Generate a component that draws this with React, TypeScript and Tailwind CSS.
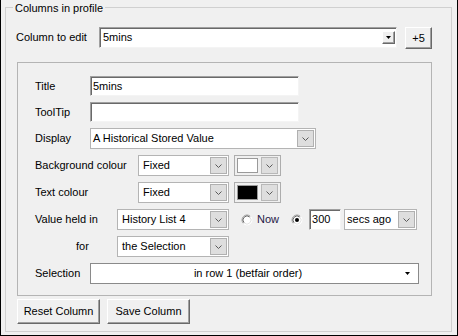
import type { JSX } from "react";

// Win10 style chevron used in the themed drop-down buttons
const Chevron = (): JSX.Element => (
    <svg width="7" height="4" viewBox="0 0 7 4">
        <path d="M0.5 0.5L3.5 3.5L6.5 0.5" fill="none" stroke="#5a5a5a" strokeWidth="1"/>
    </svg>
);

// Classic solid black drop-down triangle
const Triangle = (): JSX.Element => (
    <svg width="5" height="3" viewBox="0 0 5 3">
        <path d="M0 0H5L2.5 3Z" fill="#000"/>
    </svg>
);

const Radio = ({checked}: {checked?: boolean}): JSX.Element => (
    <svg width="12" height="12" viewBox="0 0 12 12" className="shrink-0">
        <circle cx="6" cy="6" r="5" fill="#fff"/>
        <path d="M2.46 9.54A5 5 0 0 1 9.54 2.46" fill="none" stroke="#a0a0a0"/>
        <path d="M3.17 8.83A4 4 0 0 1 8.83 3.17" fill="none" stroke="#696969"/>
        <path d="M9.54 2.46A5 5 0 0 1 2.46 9.54" fill="none" stroke="#ffffff"/>
        <path d="M8.83 3.17A4 4 0 0 1 3.17 8.83" fill="none" stroke="#e3e3e3"/>
        {checked && <circle cx="6" cy="6" r="2" fill="#000"/>}
    </svg>
);

const TextBox = ({value, className}: {value?: string; className: string}): JSX.Element => (
    <div className={`flex items-center bg-white border border-t-[#a0a0a0] border-l-[#a0a0a0] border-r-[#f4f4f4] border-b-[#f4f4f4] shadow-[inset_1px_1px_0_#696969] pl-[2px] ${className}`}>
        {value}
    </div>
);

const Combo = ({text, className, pad = "pl-[3px]"}: {text: string; className: string; pad?: string}): JSX.Element => (
    <div className={`flex h-[21px] bg-white border border-[#b4b4b4] ${className}`}>
        <span className={`flex-1 flex items-center whitespace-nowrap overflow-hidden ${pad}`}>{text}</span>
        <div className="w-[17px] m-[1px] border border-[#b0b0b0] bg-[#dedede] flex items-center justify-center">
            <Chevron/>
        </div>
    </div>
);

const ColourPicker = ({swatch}: {swatch: string}): JSX.Element => (
    <div className="ml-[5px] w-[47px] h-[21px] border border-[#adadad] flex items-center pl-[2px] gap-[3px]">
        <div className={`w-[21px] h-[15px] border border-[#9a9a9a] ${swatch}`}/>
        <div className="w-[17px] h-[17px] border border-[#b8b8b8] bg-[#dedede] flex items-center justify-center">
            <Chevron/>
        </div>
    </div>
);

const ClassicButton = ({label, className}: {label: string; className: string}): JSX.Element => (
    <button className={`flex items-center justify-center bg-[#f0f0f0] border border-t-white border-l-white border-r-[#696969] border-b-[#696969] shadow-[inset_-1px_-1px_0_#a0a0a0] ${className}`}>
        {label}
    </button>
);

function App(): JSX.Element {
    return (
        <div className="w-[458px] h-[336px] bg-[#f0f0f0] border-l border-r border-b border-black font-['Liberation_Sans',Arial,sans-serif] text-[11px] leading-[13px] text-black overflow-hidden">
            {/* Columns in profile group box */}
            <div className="relative ml-[4px] mt-[7px] w-[447px] h-[325px] border border-[#d0d0d0] pt-[19px]">
                <span className="absolute -top-[6px] left-[7px] px-[2px] bg-[#f0f0f0]">Columns in profile</span>

                {/* Column to edit */}
                <div className="flex items-start pl-[10px]">
                    <div className="w-[83px] h-[21px] flex items-center">Column to edit</div>
                    <div className="flex items-center w-[298px] h-[21px] bg-white border border-t-[#a0a0a0] border-l-[#a0a0a0] border-r-[#f4f4f4] border-b-[#f4f4f4] shadow-[inset_1px_1px_0_#696969]">
                        <span className="flex-1 pl-[3px]">5mins</span>
                        <div className="w-[13px] h-[13px] mr-[1px] flex items-center justify-center bg-[#f0f0f0] border border-t-white border-l-white border-r-[#696969] border-b-[#696969] shadow-[inset_-1px_-1px_0_#a0a0a0]">
                            <Triangle/>
                        </div>
                    </div>
                    <ClassicButton label="+5" className="ml-[8px] w-[27px] h-[22px]"/>
                </div>

                {/* Column details panel */}
                <div className="ml-[11px] mt-[13px] w-[415px] h-[234px] border border-[#b4b4b4] pt-[13px] pl-[17px] flex flex-col gap-[6px]">
                    <div className="flex items-center h-[20px]">
                        <div className="w-[55px]">Title</div>
                        <TextBox value="5mins" className="w-[209px] h-[20px]"/>
                    </div>
                    <div className="flex items-center h-[20px]">
                        <div className="w-[55px]">ToolTip</div>
                        <TextBox className="w-[209px] h-[20px]"/>
                    </div>
                    <div className="flex items-center h-[21px]">
                        <div className="w-[55px]">Display</div>
                        <Combo text="A Historical Stored Value" className="w-[226px]" pad="pl-[2px]"/>
                    </div>
                    <div className="flex items-center h-[21px]">
                        <div className="w-[103px]">Background colour</div>
                        <Combo text="Fixed" className="w-[91px]" pad="pl-[4px]"/>
                        <ColourPicker swatch="bg-white"/>
                    </div>
                    <div className="flex items-center h-[21px]">
                        <div className="w-[103px]">Text colour</div>
                        <Combo text="Fixed" className="w-[91px]" pad="pl-[4px]"/>
                        <ColourPicker swatch="bg-black"/>
                    </div>
                    <div className="flex items-center h-[21px]">
                        <div className="w-[82px]">Value held in</div>
                        <Combo text="History List 4" className="w-[112px]" pad="pl-[4px]"/>
                        <div className="ml-[12px]"><Radio/></div>
                        <span className="ml-[4px] text-[#1e1846]">Now</span>
                        <div className="ml-[12px]"><Radio checked/></div>
                        <TextBox value="300" className="ml-[6px] w-[32px] h-[21px]"/>
                        <Combo text="secs ago" className="ml-[3px] w-[73px]" pad="pl-[2px]"/>
                    </div>
                    <div className="flex items-center h-[21px]">
                        <div className="w-[82px] pl-[41px]">for</div>
                        <Combo text="the Selection" className="w-[112px]" pad="pl-[4px]"/>
                    </div>
                    <div className="flex items-center h-[21px]">
                        <div className="w-[55px]">Selection</div>
                        <div className="flex items-center w-[329px] h-[21px] bg-white border border-[#8a8a8a]">
                            <span className="flex-1 text-center">in row 1 (betfair order)</span>
                            <div className="pr-[8px] flex items-center"><Triangle/></div>
                        </div>
                    </div>
                </div>

                {/* Actions */}
                <div className="flex gap-[7px] ml-[11px] mt-[3px]">
                    <ClassicButton label="Reset Column" className="w-[83px] h-[25px]"/>
                    <ClassicButton label="Save Column" className="w-[83px] h-[25px]"/>
                </div>
            </div>
        </div>
    );
}

export default App;
